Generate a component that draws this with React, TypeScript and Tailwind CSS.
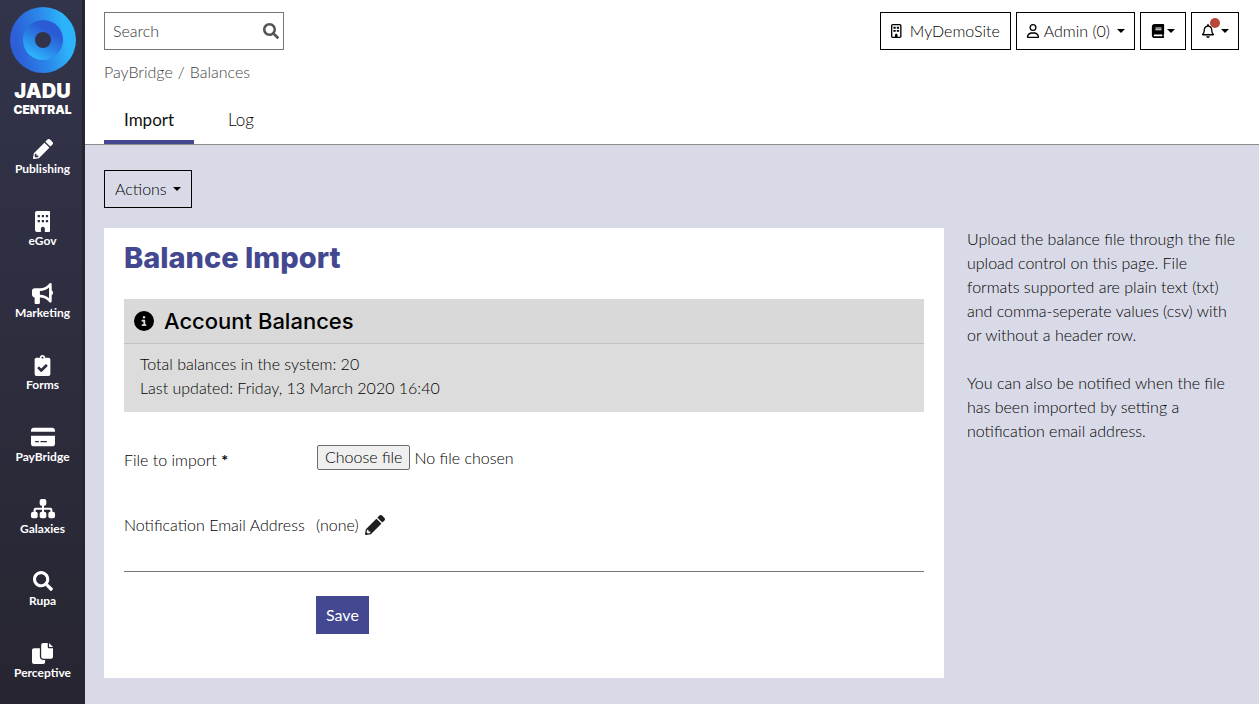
import React, { useRef, useState } from "react";
import { FaBook, FaClipboardCheck, FaRegBell, FaSearch } from "react-icons/fa";
import { FaBullhorn, FaCircleInfo, FaCreditCard, FaRegUser } from "react-icons/fa6";

const BuildingSolid = ({ className }: { className?: string }) => (
  <svg viewBox="0 0 384 512" fill="currentColor" fillRule="evenodd" className={className} aria-hidden="true">
    <path d="M48 0h288c26 0 48 22 48 48v416c0 26-22 48-48 48h-96v-80c0-26-22-48-48-48s-48 22-48 48v80H48c-26 0-48-22-48-48V48C0 22 22 0 48 0z M64 96v56h56V96z M164 96v56h56V96z M264 96v56h56V96z M64 220v56h56v-56z M164 220v56h56v-56z M264 220v56h56v-56z" />
  </svg>
);

const BuildingOutline = ({ className }: { className?: string }) => (
  <svg viewBox="0 0 384 512" fill="currentColor" fillRule="evenodd" className={className} aria-hidden="true">
    <path d="M64 0h256c35 0 64 29 64 64v384c0 35-29 64-64 64H64c-35 0-64-29-64-64V64C0 29 29 0 64 0z M64 48c-9 0-16 7-16 16v384c0 9 7 16 16 16h80v-56c0-26 22-48 48-48s48 22 48 48v56h80c9 0 16-7 16-16V64c0-9-7-16-16-16z" />
    <path d="M88 100h84v70H88z M212 100h84v70h-84z M88 216h84v70H88z M212 216h84v70h-84z" />
  </svg>
);

const Pencil = ({ className }: { className?: string }) => (
  <svg viewBox="0 0 512 512" fill="currentColor" fillRule="evenodd" className={className} aria-hidden="true">
    <path d="M498 142l-46 46c-5 5-12 5-17 0L324 77c-5-5-5-12 0-17l46-46c19-19 49-19 68 0l60 60c19 19 19 49 0 68z" />
    <path d="M301 100l111 111c5 5 5 12 0 17L150 490 28 512c-16 3-30-12-28-28l22-122L284 100c5-5 12-5 17 0z M88 424v-48H52l-12 64 32 32 64-12v-36z" />
  </svg>
);

const Sitemap = ({ className }: { className?: string }) => (
  <svg viewBox="0 0 576 512" fill="currentColor" className={className} aria-hidden="true">
    <rect x="208" y="24" width="160" height="160" rx="48" />
    <rect x="0" y="328" width="160" height="160" rx="48" />
    <rect x="208" y="328" width="160" height="160" rx="48" />
    <rect x="416" y="328" width="160" height="160" rx="48" />
    <path d="M264 170h48v66h152c26 0 48 22 48 48v60h-48v-60H312v60h-48v-60H112v60H64v-60c0-26 22-48 48-48h152z" />
  </svg>
);

const Pages = ({ className }: { className?: string }) => (
  <svg viewBox="0 0 512 512" fill="currentColor" className={className} aria-hidden="true">
    <path d="M272 0h112v96c0 18 14 32 32 32h96v208c0 26-22 48-48 48H272c-26 0-48-22-48-48V48c0-26 22-48 48-48z M416 0l96 96h-96z" />
    <path d="M48 128h144v208c0 44 36 80 80 80h48v48c0 26-22 48-48 48H48c-26 0-48-22-48-48V176c0-26 22-48 48-48z" />
  </svg>
);

const Logo = () => (
  <svg viewBox="0 0 66 66" className="size-[66px]" aria-hidden="true">
    <defs>
      <linearGradient id="ring-outer" x1="0" y1="0.6" x2="1" y2="0.4">
        <stop offset="0.1" stopColor="#2c5fd8" />
        <stop offset="0.5" stopColor="#2b86ea" />
        <stop offset="0.85" stopColor="#2cb4fb" />
      </linearGradient>
      <linearGradient id="ring-inner" x1="0.25" y1="0.95" x2="0.75" y2="0.1">
        <stop offset="0" stopColor="#2cb8fc" />
        <stop offset="0.45" stopColor="#2a80e6" />
        <stop offset="0.8" stopColor="#2b5bd4" />
      </linearGradient>
    </defs>
    <circle cx="33" cy="33" r="33" fill="url(#ring-outer)" />
    <circle cx="33" cy="33" r="20" fill="url(#ring-inner)" />
    <circle cx="33" cy="33" r="8" fill="#31334a" />
  </svg>
);

const Caret = () => (
  <svg viewBox="0 0 8 4" className="h-1 w-2" fill="currentColor" aria-hidden="true">
    <path d="M0 0h8L4 4z" />
  </svg>
);

const navItems = [
  { label: "Publishing", icon: <Pencil className="size-5" /> },
  { label: "eGov", icon: <BuildingSolid className="h-[21px]" /> },
  { label: "Marketing", icon: <FaBullhorn className="size-[21px]" /> },
  { label: "Forms", icon: <FaClipboardCheck className="size-[21px]" /> },
  { label: "PayBridge", icon: <FaCreditCard className="size-6" /> },
  { label: "Galaxies", icon: <Sitemap className="w-6" /> },
  { label: "Rupa", icon: <FaSearch className="size-5" /> },
  { label: "Perceptive", icon: <Pages className="size-[21px]" /> },
];

const Sidebar = () => (
  <aside className="w-[85px] shrink-0 bg-linear-to-b from-[#32344b] via-[#2d2d3e] to-[#262530] text-white shadow-[inset_-3px_0_0_#262633]">
    <a href="#" className="flex flex-col items-center pt-[7px]">
      <Logo />
      <span className="mt-[6px] font-['Inter'] text-[20px] font-black leading-6">JADU</span>
      <span className="font-['Inter'] text-[12px] font-black leading-[14px]">CENTRAL</span>
    </a>
    <nav className="mt-5 flex flex-col">
      {navItems.map((item) => (
        <a key={item.label} href="#" className="flex h-18 flex-col items-center">
          <span className="flex h-6 items-center">{item.icon}</span>
          <span className="text-[12px] font-bold leading-4">{item.label}</span>
        </a>
      ))}
    </nav>
  </aside>
);

const Header = () => (
  <header className="border-b border-[#8c8c8c] bg-white pl-[19px] pr-5 pt-3">
    <div className="flex items-start justify-between">
      <form className="flex h-[38px] w-[180px] items-center border border-[#757575] px-2">
        <input
          type="text"
          aria-label="Search"
          placeholder="Search"
          className="w-full min-w-0 flex-1 bg-transparent placeholder:text-[#333] focus:outline-none"
        />
        <button type="button" aria-label="Submit search" className="-mr-1 text-[#555]">
          <FaSearch className="size-4" />
        </button>
      </form>
      <div className="flex gap-[5px]">
        <button type="button" className="flex h-[38px] items-center gap-2 border border-black px-[10px]">
          <BuildingOutline className="h-[14px]" />
          MyDemoSite
        </button>
        <button type="button" className="flex h-[38px] items-center gap-1 border border-black px-[9px]">
          <FaRegUser className="size-[14px]" />
          Admin (0)
          <span className="ml-[3px]"><Caret /></span>
        </button>
        <button type="button" aria-label="Guides" className="flex h-[38px] items-center gap-[2px] border border-black px-[10px]">
          <FaBook className="size-[14px]" />
          <Caret />
        </button>
        <button type="button" aria-label="Notifications" className="relative flex h-[38px] items-center gap-[6px] border border-black px-[9px]">
          <FaRegBell className="size-[14px]" />
          <Caret />
          <span className="absolute left-[18px] top-[5px] size-[10px] rounded-full bg-[#b8473a]" />
        </button>
      </div>
    </div>
    <div className="mt-[10px] flex gap-[5px] leading-6 text-[#444]">
      <a href="#">PayBridge</a>
      <span>/</span>
      <a href="#">Balances</a>
    </div>
    <nav className="mt-3 flex gap-[14px] text-[17px]">
      <a href="#" className="border-b-4 border-[#434890] px-5 pb-2 pt-3 font-normal leading-6 text-[#111]">
        Import
      </a>
      <a href="#" className="border-b-4 border-transparent px-5 pb-2 pt-3 leading-6">
        Log
      </a>
    </nav>
  </header>
);

const ImportForm = () => {
  const fileRef = useRef<HTMLInputElement>(null);
  const [fileName, setFileName] = useState("No file chosen");

  return (
    <form className="mt-8">
      <div className="flex items-start">
        <label htmlFor="balance-file" className="w-48 shrink-0 pt-1 leading-6">
          File to import <span className="font-bold">*</span>
        </label>
        <div className="flex items-center gap-1 pl-px pt-px">
          <input
            ref={fileRef}
            id="balance-file"
            type="file"
            className="sr-only"
            onChange={(e) => setFileName(e.target.files?.[0]?.name ?? "No file chosen")}
          />
          <button
            type="button"
            onClick={() => fileRef.current?.click()}
            className="h-[25px] rounded-xs border border-[#6b6b6b] bg-[#efefef] px-[7px] pb-[2px] leading-5"
          >
            Choose file
          </button>
          <span className="leading-6">{fileName}</span>
        </div>
      </div>
      <div className="mt-[41px] flex items-start">
        <span className="w-48 shrink-0 leading-6">Notification Email Address</span>
        <div className="flex items-center gap-[6px] leading-6">
          (none)
          <button type="button" aria-label="Edit notification email address" className="text-[#1f1f1f]">
            <Pencil className="size-5" />
          </button>
        </div>
      </div>
      <div className="mt-[34px] border-t border-[#757575] pl-48 pt-6">
        <button type="submit" className="h-[38px] bg-[#434890] px-[10px] font-normal text-white">
          Save
        </button>
      </div>
    </form>
  );
};

export default function App() {
  return (
    <div className="flex min-h-screen bg-[#d9dae7] font-['Lato','Liberation_Sans',sans-serif] text-base font-light text-black">
      <Sidebar />
      <div className="min-w-0 flex-1">
        <Header />
        <main className="pb-[26px] pl-[19px] pr-5 pt-[25px]">
          <button type="button" className="flex h-[38px] items-center gap-[6px] border border-black px-[10px]">
            Actions
            <Caret />
          </button>
          <div className="mt-5 flex items-start gap-[23px]">
            <section className="min-w-0 flex-1 bg-white px-5 pb-11 pt-3">
              <h1 className="font-['Inter'] text-[29px] font-extrabold leading-9 text-[#434890]">Balance Import</h1>
              <div className="mt-[23px] bg-[#dcdcdc]">
                <h2 className="flex h-[45px] items-center gap-[10px] border-b border-[#c1c1c1] bg-[#d9d9d9] px-[10px] font-['Inter'] text-[22px] font-medium">
                  <FaCircleInfo className="size-5" />
                  Account Balances
                </h2>
                <p className="px-4 pb-3 pt-2 leading-6">
                  Total balances in the system: 20
                  <br />
                  Last updated: Friday, 13 March 2020 16:40
                </p>
              </div>
              <ImportForm />
            </section>
            <aside className="-mt-px w-[272px] shrink-0 leading-6">
              <p>
                Upload the balance file through the file upload control on this page. File formats supported are
                plain text (txt) and comma-seperate values (csv) with or without a header row.
              </p>
              <p className="mt-6">
                You can also be notified when the file has been imported by setting a notification email address.
              </p>
            </aside>
          </div>
        </main>
      </div>
    </div>
  );
}
